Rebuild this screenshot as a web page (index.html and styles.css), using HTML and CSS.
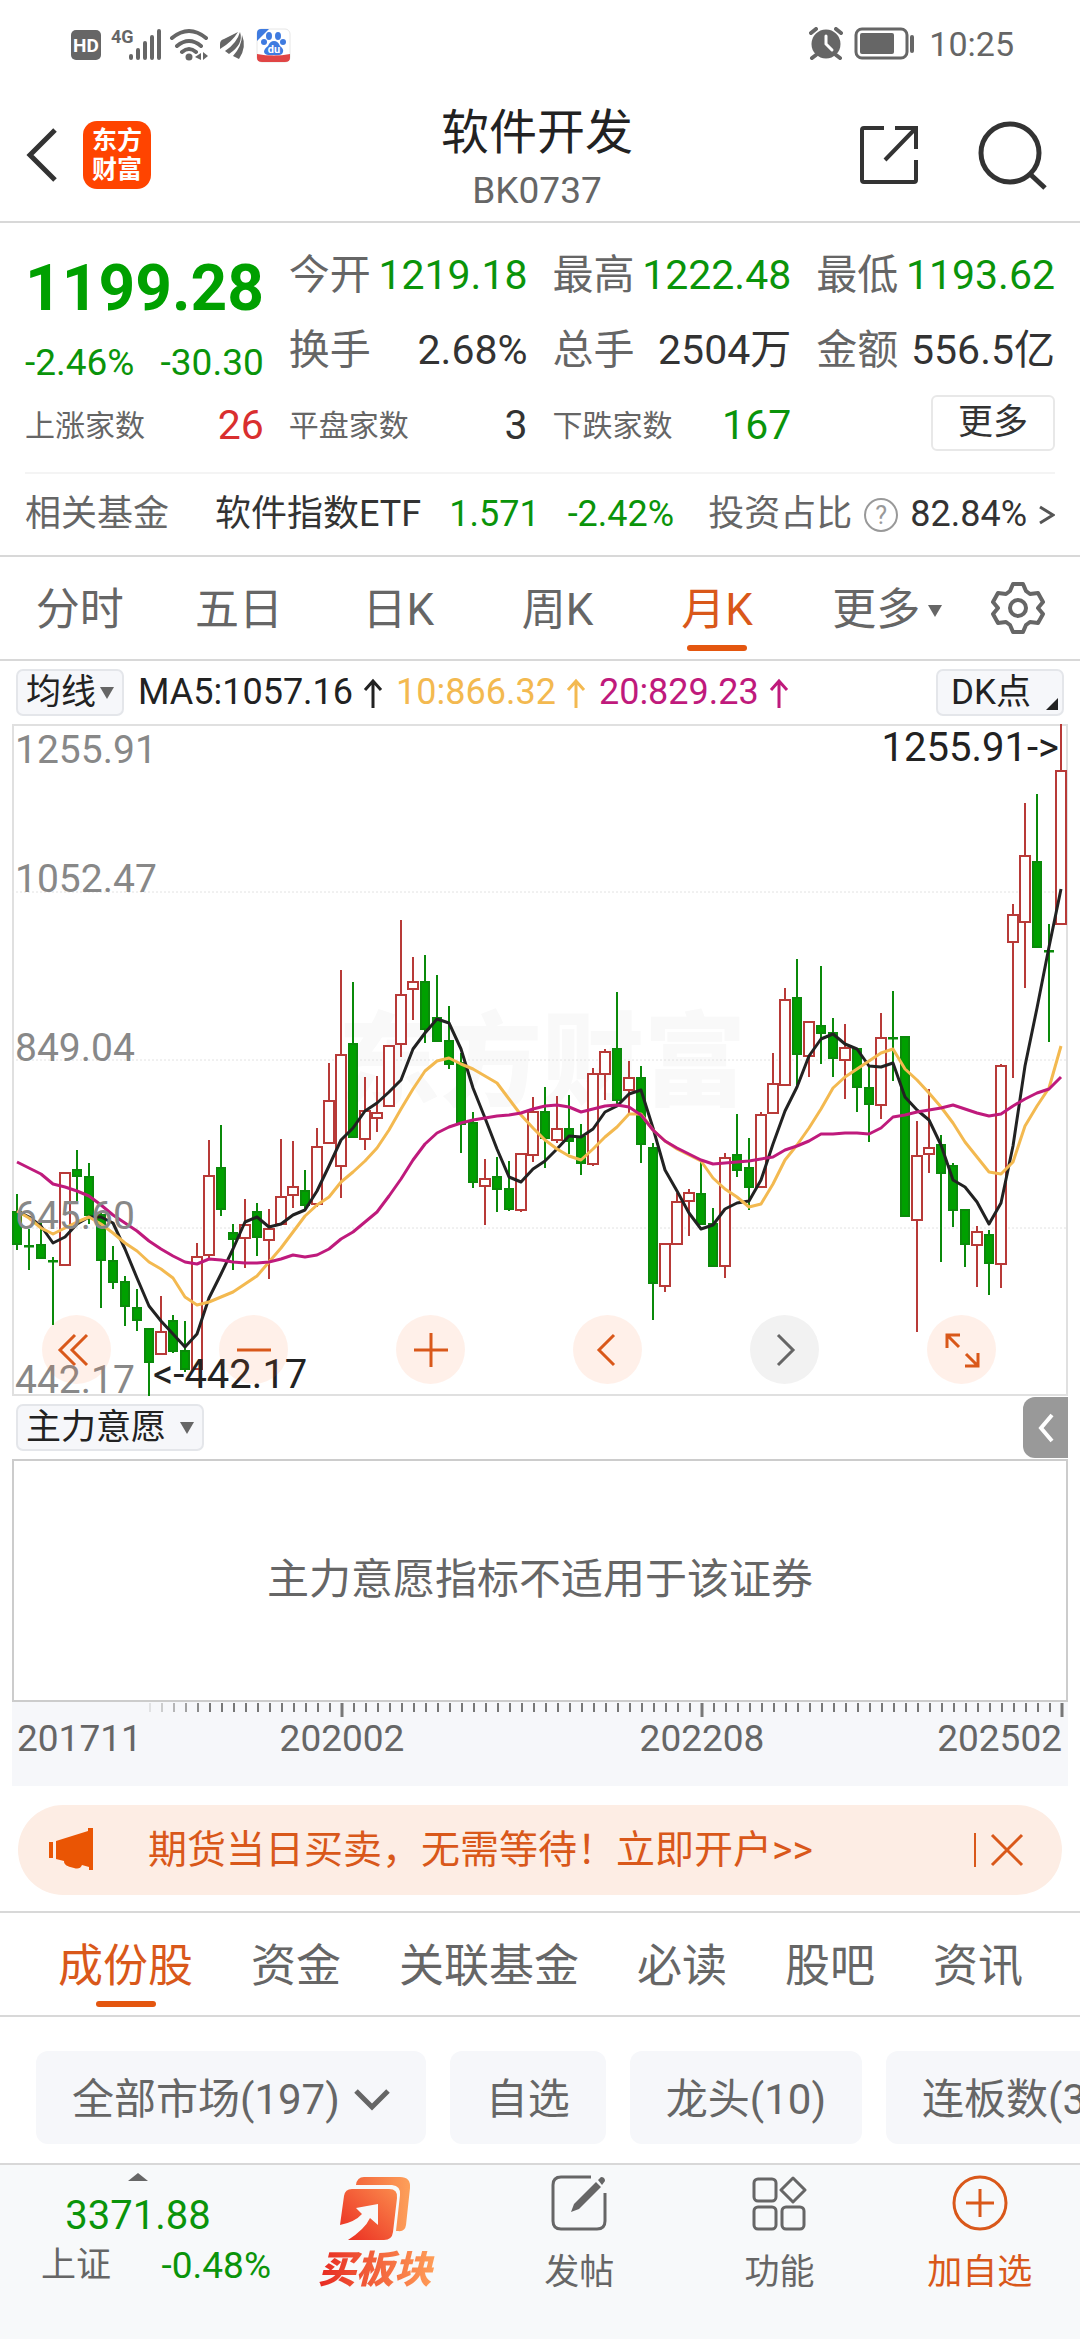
FILE: index.html
```html
<!DOCTYPE html>
<html lang="zh-CN">
<head>
  <meta charset="UTF-8">
  <meta name="viewport" content="width=device-width, initial-scale=1">
  <title>软件开发 BK0737</title>
  <link rel="stylesheet" href="styles.css">
</head>
<body>

  <div class="statusBar">
    <div class="statusGroup">
      <svg width="222" height="40" viewBox="0 0 222 40" fill="#666">
        <!-- HD -->
        <rect x="1" y="6" width="30" height="30" rx="5"/>
        <text x="16" y="28" class="hdText">HD</text>
        <text x="41" y="19" class="netText">4G</text>
        <!-- signal -->
        <g stroke="#666" stroke-width="4" stroke-linecap="round">
          <path d="M61 32v2M68 26v8M75 19v15M82 13v21M89 7v27"/>
        </g>
        <!-- wifi -->
        <g fill="none" stroke="#666" stroke-width="4" stroke-linecap="round">
          <path d="M102 14q17-14 34 0M107 22q12-10 24 0M112 28q7-6 14 0"/>
        </g>
        <circle cx="119" cy="33" r="3.5"/>
        <path d="M131 29v7l-6-3zM133 28v8l5-4z"/>
        <!-- leaf -->
        <path d="M150 20q0-4 4-5l14-7q-6 10-18 17zM155 27q12-8 15-19q4 12-11 22zM163 32q9-10 9-21q5 12-3 24z"/>
        <!-- baidu -->
        <rect x="187" y="5" width="33" height="33" rx="5" fill="#fff" stroke="#e6e6e6"/>
        <path d="M187 17V9q0-4 4-4h8z" fill="#3f7be0"/>
        <g fill="#3f7be0">
          <ellipse cx="199" cy="12" rx="3" ry="4"/>
          <ellipse cx="208" cy="12" rx="3" ry="4"/>
          <ellipse cx="194" cy="18" rx="3" ry="3"/>
          <ellipse cx="213" cy="18" rx="3" ry="3"/>
          <path d="M204 17q4 0 6 5q4 3 3 6q-1 4-9 3q-9 1-10-3q0-3 4-6q2-5 6-5z"/>
        </g>
        <text x="204" y="29" class="duText">du</text>
        <path d="M187 30q17 3 33 0v4q0 4-5 4h-23q-5 0-5-4z" fill="#e04545"/>
      </svg>
    </div>
    <div class="statusGroup">
      <svg width="106" height="34" viewBox="0 0 106 34">
        <circle cx="17" cy="17" r="14.500" fill="#666"/>
        <path d="M2 6l5-4M32 6l-5-4M7 28l-4 3M27 28l4 3" stroke="#666" stroke-width="4" stroke-linecap="round"/>
        <path d="M17 9v8l6 6" fill="none" stroke="#fff" stroke-width="3" stroke-linecap="round"/>
        <rect x="47" y="2" width="51" height="29" rx="6" fill="none" stroke="#666" stroke-width="3"/>
        <rect x="51" y="6" width="34" height="21" rx="2" fill="#666"/>
        <rect x="101" y="8" width="4" height="18" rx="2" fill="#666"/>
      </svg>
      <span class="clock">10:25</span>
    </div>
  </div>

  <header class="header">
    <div class="headerSide">
      <button type="button" class="iconBtn" aria-label="返回">
        <svg width="32" height="56" viewBox="0 0 32 56" fill="none" stroke="#333" stroke-width="5">
          <path d="M29 3L4 28l25 25"/>
        </svg>
      </button>
      <a href="#" class="logo"><span>东方</span><span>财富</span></a>
    </div>
    <div class="headerTitle">
      <h1>软件开发</h1>
      <p>BK0737</p>
    </div>
    <div class="headerSide headerRight">
      <button type="button" class="iconBtn" aria-label="分享">
        <svg width="58" height="58" viewBox="0 0 58 58" fill="none" stroke="#333" stroke-width="4">
          <path d="M24 2H4q-2 0-2 2v50q0 2 2 2h50q2 0 2-2V34M35 2h21v21M55 3L25 34"/>
        </svg>
      </button>
      <button type="button" class="iconBtn" aria-label="搜索">
        <svg width="70" height="70" viewBox="0 0 70 70" fill="none" stroke="#333" stroke-width="5">
          <circle cx="32" cy="33" r="29"/>
          <path d="M52 54l15 14"/>
        </svg>
      </button>
    </div>
  </header>

  <section class="quote">
    <div class="quoteGrid">
      <div class="priceBlock">
        <strong class="price">1199.28</strong>
        <div class="change"><span>-2.46%</span><span>-30.30</span></div>
      </div>
      <div class="cell"><span>今开</span><b class="down">1219.18</b></div>
      <div class="cell"><span>最高</span><b class="down">1222.48</b></div>
      <div class="cell"><span>最低</span><b class="down">1193.62</b></div>
      <div class="cell"><span>换手</span><b>2.68%</b></div>
      <div class="cell"><span>总手</span><b>2504万</b></div>
      <div class="cell"><span>金额</span><b>556.5亿</b></div>
      <div class="cell small"><span>上涨家数</span><b class="up">26</b></div>
      <div class="cell small"><span>平盘家数</span><b>3</b></div>
      <div class="cell small"><span>下跌家数</span><b class="down">167</b></div>
      <div class="cell moreCell"><button type="button" class="moreBtn">更多</button></div>
    </div>
    <div class="fundRow">
      <span class="fundLabel">相关基金</span>
      <span class="fundName">软件指数ETF</span>
      <span class="down">1.571</span>
      <span class="down">-2.42%</span>
      <a href="#" class="fundRatio">
        <span class="fundLabel">投资占比</span>
        <span class="help">?</span>
        <span>82.84%</span>
        <svg width="16" height="22" viewBox="0 0 16 22" fill="none" stroke="#555" stroke-width="3"><path d="M1 3l13 8-13 8"/></svg>
      </a>
    </div>
  </section>

  <nav class="periodTabs">
    <button type="button" class="tab">分时</button>
    <button type="button" class="tab">五日</button>
    <button type="button" class="tab">日K</button>
    <button type="button" class="tab">周K</button>
    <button type="button" class="tab active">月K</button>
    <button type="button" class="tab tabMore">更多<i class="caret"></i></button>
    <button type="button" class="tab tabSetting" aria-label="设置">
      <svg width="54" height="54" viewBox="0 0 54 54" fill="none" stroke="#666" stroke-width="4" stroke-linejoin="round">
        <path d="M22 3h10l3 7 4 3 8-1 5 9-5 6 5 6-5 9-8-1-4 3-3 7H22l-3-7-4-3-8 1-5-9 5-6-5-6 5-9 8 1 4-3z"/>
        <circle cx="27" cy="27" r="8"/>
      </svg>
    </button>
  </nav>

  <section class="chartArea">
    <div class="maRow">
      <button type="button" class="pill">均线<i class="caret"></i></button>
      <div class="maValues">
        <span>MA5:1057.16<svg class="arrow" viewBox="0 0 20 30"><path d="M10 30V3M2 12l8-9 8 9"/></svg></span>
        <span class="ma10">10:866.32<svg class="arrow" viewBox="0 0 20 30"><path d="M10 30V3M2 12l8-9 8 9"/></svg></span>
        <span class="ma20">20:829.23<svg class="arrow" viewBox="0 0 20 30"><path d="M10 30V3M2 12l8-9 8 9"/></svg></span>
      </div>
      <button type="button" class="pill dkBtn">DK点<i class="corner"></i></button>
    </div>

    <div class="chartBox">
      <svg id="kline" class="kline" viewBox="0 0 1056 672"></svg>
      <div class="chartTools">
        <button type="button" aria-label="最左"><svg viewBox="0 0 40 40"><path d="M18 5L3 20l15 15M30 5L15 20l15 15"/></svg></button>
        <button type="button" aria-label="缩小"><svg viewBox="0 0 40 40"><path d="M3 20h34"/></svg></button>
        <button type="button" aria-label="放大"><svg viewBox="0 0 40 40"><path d="M3 20h34M20 3v34"/></svg></button>
        <button type="button" aria-label="左移"><svg viewBox="0 0 40 40"><path d="M26 5L11 20l15 15"/></svg></button>
        <button type="button" class="disabled" aria-label="右移"><svg viewBox="0 0 40 40"><path d="M13 5l15 15-15 15"/></svg></button>
        <button type="button" aria-label="全屏"><svg viewBox="0 0 40 40"><path d="M5 18V5h13M5 5l12 12M36 23v13H23M36 36L24 24"/></svg></button>
      </div>
    </div>

    <div class="indicatorRow">
      <button type="button" class="pill wide">主力意愿<i class="caret"></i></button>
      <button type="button" class="foldBtn" aria-label="展开">
        <svg width="18" height="30" viewBox="0 0 18 30" fill="none" stroke="#fff" stroke-width="4"><path d="M15 2L4 15l11 13"/></svg>
      </button>
    </div>
    <div class="indicatorBox">主力意愿指标不适用于该证券</div>

    <div class="timeAxis">
      <svg id="ticks" class="ticks" viewBox="0 0 1056 16"></svg>
      <div class="timeLabels">
        <span>201711</span>
        <span>202002</span>
        <span>202208</span>
        <span>202502</span>
      </div>
    </div>
  </section>

  <div class="banner">
    <svg width="48" height="44" viewBox="0 0 48 44" fill="#ea5504">
      <path d="M1 14h4v16H1zM8 13L40 3V0h5v42h-4v-3l-7-2q-2 5-8 3-11-2-10-7l-8-2z"/>
    </svg>
    <a href="#">期货当日买卖，无需等待！立即开户&gt;&gt;</a>
    <button type="button" class="closeBtn" aria-label="关闭">
      <svg width="34" height="34" viewBox="0 0 34 34" fill="none" stroke="#d9581a" stroke-width="3"><path d="M2 2l30 30M32 2L2 32"/></svg>
    </button>
  </div>

  <nav class="infoTabs">
    <a href="#" class="active">成份股</a>
    <a href="#">资金</a>
    <a href="#">关联基金</a>
    <a href="#">必读</a>
    <a href="#">股吧</a>
    <a href="#">资讯</a>
  </nav>

  <div class="chips">
    <button type="button">全部市场(197)<svg width="36" height="22" viewBox="0 0 36 22" fill="none" stroke="#666" stroke-width="5"><path d="M2 2l16 16L34 2"/></svg></button>
    <button type="button">自选</button>
    <button type="button">龙头(10)</button>
    <button type="button">连板数(3)</button>
  </div>

  <footer class="bottomBar">
    <a href="#" class="indexBlock">
      <span class="indexTop">
        <i class="caretUp"></i>
        <span class="indexValue">3371.88</span>
      </span>
      <span class="indexLine"><span class="indexName">上证</span><span>-0.48%</span></span>
    </a>
    <a href="#" class="buyBlock">
      <svg width="72" height="66" viewBox="0 0 72 66">
        <defs>
          <linearGradient id="buyFront" x1="0" y1="1" x2="1" y2="0">
            <stop offset="0" stop-color="#ea2a20"/>
            <stop offset="1" stop-color="#fb8a4c"/>
          </linearGradient>
          <linearGradient id="buyBack" x1="0" y1="0" x2="1" y2="0">
            <stop offset="0" stop-color="#f4683c"/>
            <stop offset="1" stop-color="#fda05a"/>
          </linearGradient>
        </defs>
        <path d="M17 9q1-8 8-8h36q11 0 10 11l-4 37q-1 7-8 6h-2l4-36q1-9-8-10z" fill="url(#buyBack)"/>
        <path d="M1 49l4-29q1-7 8-7h37q9 0 8 9l-4 34q-1 8-9 8H9q17-11 22-22l8 7V28l-22 4 6 6q-7 8-22 11z" fill="url(#buyFront)"/>
      </svg>
      <span class="buyText">买板块</span>
    </a>
    <a href="#" class="navItem">
      <svg width="56" height="56" viewBox="0 0 56 56" fill="none" stroke="#666" stroke-width="3">
        <path d="M40 2H10q-8 0-8 8v36q0 8 8 8h36q8 0 8-8V18"/>
        <path d="M20 37l3-8L45 7l5 5-22 22zM47 5l3-3q4 0 4 4l-3 4z" fill="#666" stroke="none"/>
      </svg>
      <span>发帖</span>
    </a>
    <a href="#" class="navItem">
      <svg width="56" height="56" viewBox="0 0 56 56" fill="none" stroke="#666" stroke-width="3">
        <rect x="3" y="4" width="22" height="22" rx="4"/>
        <rect x="3" y="32" width="22" height="22" rx="4"/>
        <rect x="31" y="32" width="22" height="22" rx="4"/>
        <path d="M42 3l12 12-12 12-12-12z" stroke-linejoin="round"/>
      </svg>
      <span>功能</span>
    </a>
    <a href="#" class="navItem add">
      <svg width="56" height="56" viewBox="0 0 56 56" fill="none" stroke="#d9581a" stroke-width="3">
        <circle cx="28" cy="28" r="26"/>
        <path d="M14 28h28M28 14v28"/>
      </svg>
      <span>加自选</span>
    </a>
  </footer>

  <script src="chart.js"></script>
</body>
</html>
```

FILE: styles.css
```css
* {
  box-sizing: border-box;
}
body {
  margin: 0;
  background-color: #fff;
  color: #333;
  font-family: Roboto, "Noto Sans CJK SC", sans-serif;
  font-size: 36px;
  line-height: 1.2;
  overflow-x: hidden;
}
button {
  margin: 0;
  padding: 0;
  border: 0;
  background: none;
  color: inherit;
  font-family: inherit;
  font-size: inherit;
  line-height: inherit;
}
a {
  color: inherit;
  text-decoration: none;
}
svg {
  display: block;
  flex: none;
}
.up {
  color: #d92f2f;
}
.down {
  color: #0a940a;
}
.caret {
  border: 7px solid transparent;
  border-top: 12px solid #666;
  border-bottom: 0;
}

/* status bar */
.statusBar {
  display: flex;
  justify-content: space-between;
  align-items: center;
  height: 88px;
  padding: 0 66px 0 70px;
}
.statusGroup {
  display: flex;
  align-items: center;
  gap: 14px;
}
.clock {
  color: #666;
  font-size: 34px;
}
.hdText {
  fill: #fff;
  font-size: 19px;
  font-weight: bold;
  text-anchor: middle;
}
.netText {
  font-size: 18px;
  font-weight: bold;
}
.duText {
  fill: #fff;
  font-size: 11px;
  font-weight: bold;
  text-anchor: middle;
}

/* header */
.header {
  display: flex;
  align-items: center;
  height: 135px;
  padding: 0 32px 0 26px;
  border-bottom: 2px solid #d8d8d8;
}
.headerSide {
  flex: 1;
  display: flex;
  align-items: center;
  gap: 25px;
}
.headerRight {
  justify-content: flex-end;
  gap: 60px;
}
.logo {
  display: flex;
  flex-direction: column;
  align-items: center;
  justify-content: center;
  width: 68px;
  height: 68px;
  border-radius: 14px;
  background-color: #ff4400;
  color: #fff;
  font-size: 25px;
  font-weight: bold;
  line-height: 29px;
}
.headerTitle {
  padding-top: 10px;
  text-align: center;
}
.headerTitle h1 {
  margin: 0;
  color: #222;
  font-size: 48px;
  font-weight: normal;
  line-height: 62px;
}
.headerTitle p {
  margin: 0;
  color: #666;
  font-size: 37px;
  line-height: 54px;
}

/* quote */
.quote {
  padding: 15px 25px 0;
  border-bottom: 2px solid #d8d8d8;
}
.quoteGrid {
  display: grid;
  grid-template-columns: repeat(4, minmax(0, 1fr));
  grid-auto-rows: 75px;
  column-gap: 25px;
  padding-bottom: 9px;
  border-bottom: 2px solid #f4f4f4;
}
.priceBlock {
  grid-row: span 2;
  display: flex;
  flex-direction: column;
  color: #00a000;
}
.price {
  font-size: 64px;
  line-height: 102px;
}
.change {
  display: flex;
  justify-content: space-between;
  font-size: 37px;
  line-height: 46px;
  color: #0a940a;
}
.cell {
  display: flex;
  align-items: center;
  justify-content: space-between;
  font-size: 41px;
  white-space: nowrap;
}
.cell span {
  color: #666;
}
.cell b {
  font-weight: normal;
}
.small span {
  font-size: 30px;
}
.moreCell {
  justify-content: flex-end;
}
.moreBtn {
  width: 124px;
  height: 56px;
  margin-bottom: 6px;
  border: 2px solid #e8e8e8;
  border-radius: 6px;
  font-size: 35px;
}
.fundRow {
  display: flex;
  align-items: center;
  gap: 28px;
  height: 81px;
  white-space: nowrap;
}
.fundName {
  margin-left: 18px;
}
.fundLabel {
  color: #666;
}
.fundRatio {
  display: flex;
  align-items: center;
  gap: 12px;
  margin-left: auto;
}
.help {
  width: 34px;
  height: 34px;
  border: 2px solid #999;
  border-radius: 50%;
  color: #999;
  font-size: 25px;
  line-height: 31px;
  text-align: center;
}

/* period tabs */
.periodTabs {
  display: flex;
  height: 104px;
  border-bottom: 2px solid #d8d8d8;
}
.tab {
  position: relative;
  flex: 1;
  display: flex;
  align-items: center;
  justify-content: center;
  padding-top: 5px;
  color: #666;
  font-size: 44px;
}
.tabMore .caret {
  position: absolute;
  left: 50%;
  margin-left: 52px;
}
.tabSetting {
  flex: none;
  width: 124px;
  padding-top: 0;
}
.active {
  color: #d9581a;
}
.tab.active::after,
.infoTabs .active::after {
  content: "";
  position: absolute;
  bottom: 8px;
  left: 50%;
  width: 60px;
  height: 6px;
  margin-left: -30px;
  border-radius: 3px;
  background-color: #e4560f;
}

/* chart */
.chartArea {
  padding: 0 12px;
}
.maRow {
  display: flex;
  align-items: center;
  height: 63px;
  padding: 0 4px;
}
.pill {
  display: flex;
  align-items: center;
  justify-content: center;
  gap: 4px;
  width: 108px;
  height: 47px;
  border: 2px solid #e4e6ea;
  border-radius: 7px;
  background-color: #f6f7fa;
  color: #222;
  font-size: 35px;
  white-space: nowrap;
}
.wide {
  width: 188px;
  gap: 14px;
}
.maValues {
  flex: 1;
  display: flex;
  gap: 13px;
  padding-left: 14px;
  color: #222;
}
.maValues span {
  display: flex;
  align-items: center;
  gap: 10px;
}
.arrow {
  width: 20px;
  height: 30px;
  fill: none;
  stroke: currentColor;
  stroke-width: 3;
}
.maValues .ma10 {
  color: #f3b950;
}
.maValues .ma20 {
  color: #bf1a7c;
}
.dkBtn {
  position: relative;
  justify-content: flex-start;
  width: 128px;
  padding-left: 13px;
}
.corner {
  position: absolute;
  right: 4px;
  bottom: 4px;
  border-left: 12px solid transparent;
  border-bottom: 12px solid #222;
}
.chartBox {
  position: relative;
}
.kline {
  width: 100%;
  height: auto;
  overflow: visible;
}
.kline .frame {
  fill: none;
  stroke: #e0e0e0;
  stroke-width: 2;
}
.kline .grid {
  stroke: #e2e2e2;
  stroke-width: 1;
  stroke-dasharray: 2 2;
}
.kline .watermark {
  fill: #f9f9f9;
  font-size: 102px;
  font-weight: 900;
  text-anchor: middle;
}
.kline .rise {
  fill: #fff;
  stroke: #b83a38;
  stroke-width: 2;
}
.kline .fall {
  fill: #00a000;
  stroke: #0a8a0a;
  stroke-width: 2;
}
.kline .ma {
  fill: none;
  stroke-width: 3;
  stroke-linejoin: round;
}
.kline .price5 {
  stroke: #222;
}
.kline .price10 {
  stroke: #f3b950;
}
.kline .price20 {
  stroke: #bf1a7c;
}
.kline .scaleText {
  fill: #888;
  font-size: 39px;
}
.kline .markText {
  fill: #222;
  font-size: 40px;
}
.chartTools {
  position: absolute;
  right: 72px;
  bottom: 12px;
  left: 30px;
  display: flex;
  justify-content: space-between;
}
.chartTools button {
  display: flex;
  align-items: center;
  justify-content: center;
  width: 69px;
  height: 69px;
  border-radius: 50%;
  background-color: rgba(255, 110, 40, 0.1);
  color: #d9581a;
}
.chartTools svg {
  width: 40px;
  height: 40px;
  fill: none;
  stroke: currentColor;
  stroke-width: 3;
}
.chartTools .disabled {
  background-color: #f2f2f2;
  color: #666;
}
.indicatorRow {
  display: flex;
  align-items: center;
  justify-content: space-between;
  height: 63px;
  padding-left: 4px;
}
.foldBtn {
  display: flex;
  align-items: center;
  justify-content: center;
  width: 45px;
  height: 61px;
  border-radius: 12px 0 0 12px;
  background-color: #999;
}
.indicatorBox {
  display: flex;
  align-items: center;
  justify-content: center;
  height: 243px;
  border: 2px solid #ccc;
  color: #666;
  font-size: 42px;
}
.timeAxis {
  height: 84px;
  background-color: #f6f7fa;
}
.ticks {
  width: 100%;
  height: auto;
}
.timeLabels {
  display: grid;
  grid-template-columns: 150fr 360fr 360fr 180fr;
  padding: 0 6px 0 0;
  color: #666;
  font-size: 37px;
  line-height: 42px;
  text-align: center;
}
.timeLabels span:first-child {
  padding-left: 5px;
  text-align: left;
}
.timeLabels span:last-child {
  text-align: right;
}

/* banner */
.banner {
  display: flex;
  align-items: center;
  height: 90px;
  margin: 19px 18px 16px;
  padding: 0 38px 0 30px;
  border-radius: 45px;
  background-color: #fdede4;
  color: #d9581a;
  font-size: 39px;
}
.banner a {
  flex: 1;
  padding-left: 52px;
}
.closeBtn {
  padding-left: 14px;
  border-left: 2px solid #d9581a;
}

/* info tabs */
.infoTabs {
  display: flex;
  gap: 58px;
  height: 106px;
  padding: 0 58px;
  border-top: 2px solid #d8d8d8;
  border-bottom: 2px solid #d8d8d8;
  color: #666;
  font-size: 45px;
  line-height: 108px;
  white-space: nowrap;
}
.infoTabs a {
  position: relative;
}

/* filter chips */
.chips {
  display: flex;
  gap: 24px;
  padding: 34px 0 19px 36px;
  overflow: hidden;
}
.chips button {
  flex: none;
  display: flex;
  align-items: center;
  gap: 14px;
  height: 93px;
  padding: 5px 36px 0;
  border-radius: 12px;
  background-color: #f6f7fa;
  color: #666;
  font-size: 42px;
}

/* bottom bar */
.bottomBar {
  display: flex;
  height: 176px;
  padding: 0 0 0 41px;
  border-top: 2px solid #d8d8d8;
  background-color: #f7f9fa;
  color: #666;
  font-size: 35px;
}
.indexBlock {
  display: flex;
  flex-direction: column;
  width: 230px;
  color: #0a940a;
}
.indexTop {
  display: flex;
  flex-direction: column;
  align-items: center;
  padding-right: 36px;
}
.caretUp {
  margin-top: 8px;
  border: 10px solid transparent;
  border-top: 0;
  border-bottom: 8px solid #666;
}
.indexValue {
  margin-top: 10px;
  font-size: 40px;
  line-height: 50px;
}
.indexLine {
  display: flex;
  justify-content: space-between;
  line-height: 50px;
}
.indexLine span:last-child {
  font-size: 37px;
}
.indexName {
  color: #666;
}
.buyBlock {
  display: flex;
  flex-direction: column;
  align-items: center;
  width: 208px;
  padding-top: 11px;
}
.buyText {
  padding: 0 4px;
  background-image: linear-gradient(90deg, #e6251f, #ff9f58);
  background-clip: text;
  -webkit-background-clip: text;
  color: transparent;
  font-size: 38px;
  font-style: italic;
  font-weight: 900;
  line-height: 56px;
}
.navItem {
  flex: 1;
  display: flex;
  flex-direction: column;
  align-items: center;
  gap: 17px;
  padding-top: 10px;
  line-height: 50px;
}
.add {
  color: #d9581a;
}
```

FILE: chart.js
```js
(function() {
  'use strict';

  var NS = 'http://www.w3.org/2000/svg';
  var STEP = 12;
  var LEFT = 5;

  // [type, high, bodyTop, bodyBottom, low], levels count down from the chart top
  var candles = [
    ['f',1061,1102,1174,1188], ['f',1140,1178,1178,1232], ['f',1127,1177,1206,1206], ['f',1203,1211,1211,1356],
    ['r',1015,1015,1221,1221], ['f',964,1007,1021,1077], ['f',992,1024,1109,1130], ['f',1105,1109,1210,1318],
    ['f',1178,1212,1258,1274], ['f',1246,1258,1312,1357], ['f',1275,1317,1344,1368], ['f',1364,1364,1438,1514],
    ['r',1291,1370,1421,1421], ['f',1333,1346,1414,1418], ['f',1346,1413,1454,1460], ['r',1171,1203,1454,1454],
    ['r',941,1021,1199,1208], ['f',908,1004,1095,1111], ['f',1130,1149,1163,1232], ['r',1072,1131,1161,1227],
    ['f',1081,1102,1157,1200], ['r',1095,1140,1164,1252], ['r',939,1068,1128,1128], ['r',943,1046,1065,1094],
    ['f',1009,1054,1086,1098], ['r',915,957,1084,1091], ['r',768,853,947,947], ['r',561,750,1000,1070],
    ['f',588,726,934,934], ['r',800,875,939,964], ['r',797,881,892,922], ['r',731,731,865,865],
    ['r',448,615,725,755], ['r',530,587,603,672], ['f',526,588,693,724], ['f',571,668,720,720],
    ['f',641,719,771,782], ['f',745,768,905,971], ['f',877,903,1035,1049], ['r',984,1028,1044,1131],
    ['f',979,1024,1051,1102], ['f',988,1051,1095,1100], ['r',972,972,1098,1102], ['r',844,877,975,989],
    ['f',821,877,937,1003], ['r',843,916,940,948], ['f',839,916,942,972], ['f',905,935,993,1020],
    ['r',780,794,994,1000], ['r',738,743,793,851], ['f',609,738,852,868], ['r',764,801,828,880],
    ['f',775,802,950,992], ['f',948,959,1261,1345], ['r',1173,1173,1267,1281], ['r',1060,1080,1174,1174],
    ['r',1051,1060,1078,1155], ['f',988,1061,1130,1130], ['f',1093,1128,1224,1224], ['r',970,982,1222,1250],
    ['f',883,975,1007,1024], ['f',937,1003,1045,1097], ['r',878,885,1045,1045], ['r',746,816,880,880],
    ['r',601,627,817,817], ['f',535,623,748,818], ['r',677,677,753,800], ['f',550,686,702,771],
    ['f',667,701,758,800], ['r',681,735,761,850], ['f',738,738,821,878], ['f',776,824,860,945],
    ['r',657,713,862,893], ['f',607,713,713,808], ['f',710,710,1110,1112], ['r',899,977,1119,1371],
    ['r',826,959,973,1015], ['f',929,952,1015,1213], ['f',992,1000,1098,1135], ['f',1098,1098,1174,1225],
    ['r',1133,1147,1175,1271], ['f',1142,1153,1217,1287], ['r',771,775,1219,1272], ['r',412,436,498,802],
    ['r',186,305,452,600], ['f',166,318,508,508], ['f',458,517,517,722], ['r',9,114,458,458]
  ];

  var averages = {
    price5: [1100,1114,1134,1172,1157,1130,1114,1113,1127,1185,1249,1313,1346,1375,1404,1376,1295,1240,1185,1124,1114,1135,
      1130,1108,1097,1055,1000,940,915,875,858,833,806,738,702,670,678,738,825,892,960,1023,1036,1005,987,961,931,934,916,879,
      864,837,828,915,1008,1055,1104,1140,1132,1095,1081,1078,1030,950,876,822,752,714,703,725,738,775,777,769,844,874,895,953,
      1030,1045,1079,1129,1081,955,776,645,508,378],
    price10: [1100,1116,1138,1151,1137,1124,1113,1128,1150,1172,1189,1214,1230,1250,1293,1310,1303,1292,1282,1264,1245,1215,
      1183,1146,1112,1087,1069,1035,1012,987,959,918,872,826,787,764,757,770,781,798,814,850,885,915,941,960,976,985,961,934,
      912,883,882,918,942,960,975,987,1027,1051,1068,1090,1084,1040,986,952,914,871,825,800,782,764,747,737,782,807,835,868,
      902,945,978,1012,1018,990,910,865,825,731],
    price20: [991,1003,1018,1040,1047,1055,1067,1087,1108,1127,1144,1167,1185,1201,1215,1218,1208,1210,1215,1217,1217,1214,
      1207,1199,1202,1198,1186,1163,1146,1124,1102,1066,1028,986,949,926,912,903,896,891,886,884,880,871,864,862,867,878,872,
      865,863,867,885,918,942,959,973,985,994,992,989,987,983,979,964,955,942,928,927,926,925,927,915,889,884,879,874,869,863,
      872,880,888,882,864,848,836,827,799]
  };

  var kline = document.getElementById('kline');
  var ticks = document.getElementById('ticks');

  function add(parent, name, attrs, text) {
    var el = document.createElementNS(NS, name);
    Object.keys(attrs).forEach(function(key) {
      el.setAttribute(key, attrs[key]);
    });
    if (text) {
      el.textContent = text;
    }
    parent.appendChild(el);
  }

  function toX(index) {
    return LEFT + index * STEP;
  }

  function toY(level) {
    return Math.round((level - 9) * 671 / 1503);
  }

  function drawCandle(candle, i) {
    var rise = candle[0] === 'r';
    var cls  = rise ? 'rise' : 'fall';
    var x    = toX(i);
    var top  = toY(candle[2]);
    var h    = toY(candle[3]) - top;
    var half = rise ? 5 : 4;
    add(kline, 'path', {'class': cls, d: 'M' + x + ' ' + toY(candle[1]) + 'V' + toY(candle[4])});
    add(kline, 'rect', {'class': cls, x: x - half, y: top, width: half * 2, height: Math.max(h, 0.5)});
  }

  // frame, watermark, grid
  add(kline, 'rect', {'class': 'frame', x: 1, y: 1, width: 1054, height: 670});
  add(kline, 'text', {'class': 'watermark', x: 530, y: 374}, '东方财富');
  [168, 336, 504].forEach(function(y) {
    add(kline, 'path', {'class': 'grid', d: 'M0 ' + y + 'H1056'});
  });

  candles.forEach(drawCandle);

  Object.keys(averages).forEach(function(name) {
    var points = averages[name].map(function(level, i) {
      return toX(i) + ',' + toY(level);
    });
    add(kline, 'polyline', {'class': 'ma ' + name, points: points.join(' ')});
  });

  // price scale
  [['1255.91', 39], ['1052.47', 168], ['849.04', 337], ['645.60', 505], ['442.17', 669]].forEach(function(item) {
    add(kline, 'text', {'class': 'scaleText', x: 3, y: item[1]}, item[0]);
  });
  add(kline, 'text', {'class': 'markText', x: 1047, y: 37, 'text-anchor': 'end'}, '1255.91->');
  add(kline, 'text', {'class': 'markText', x: 141, y: 664}, '<-442.17');

  // month ticks, the first ones fade in
  for (var i = 11; i < 88; i++) {
    var major = (87 - i) % 30 === 0;
    add(ticks, 'path', {
      d: 'M' + (toX(i) + 1) + ' 1v' + (major ? 14 : 9),
      stroke: '#777',
      'stroke-width': major ? 3 : 2,
      opacity: Math.min(1, (i - 10) / 6)
    });
  }
})();
```
